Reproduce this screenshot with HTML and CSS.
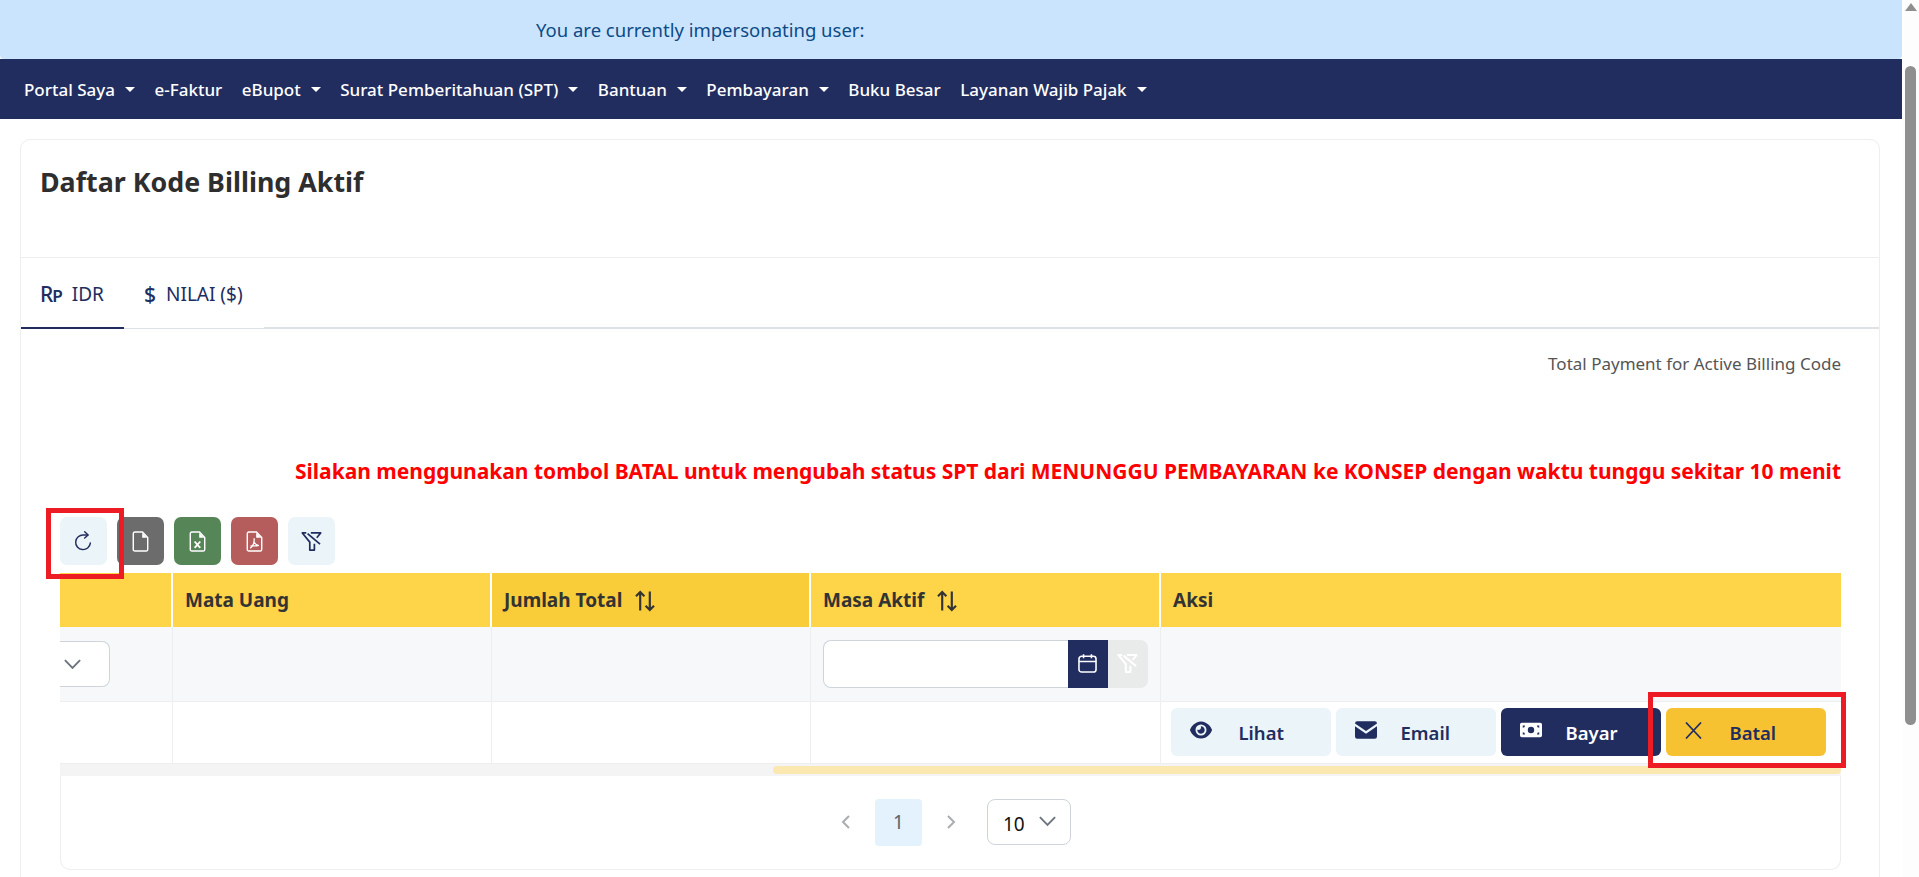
FILE: index.html
```html
<!DOCTYPE html>
<html lang="en">
<head>
    <meta charset="UTF-8">
    <meta name="viewport" content="width=device-width, initial-scale=1.0">
    <title>Daftar Kode Billing Aktif</title>
    <link rel="stylesheet" href="styles.css">
</head>
<body>
<div class="page">
    <div class="main">
        <div class="alert">You are currently impersonating user:</div>

        <nav class="navbar">
            <a class="nav-link caret">Portal Saya</a>
            <a class="nav-link">e-Faktur</a>
            <a class="nav-link caret">eBupot</a>
            <a class="nav-link caret">Surat Pemberitahuan (SPT)</a>
            <a class="nav-link caret">Bantuan</a>
            <a class="nav-link caret">Pembayaran</a>
            <a class="nav-link">Buku Besar</a>
            <a class="nav-link caret">Layanan Wajib Pajak</a>
        </nav>

        <div class="card">
            <div class="card-header">
                <h1>Daftar Kode Billing Aktif</h1>
            </div>

            <div class="tabs">
                <div class="tab active"><span class="tab-icon rp">Rp</span>IDR</div>
                <div class="tab"><span class="tab-icon dollar">$</span>NILAI ($)</div>
            </div>

            <div class="card-body">
                <p class="total">Total Payment for Active Billing Code</p>
                <p class="warning">Silakan menggunakan tombol BATAL untuk mengubah status SPT dari MENUNGGU PEMBAYARAN ke KONSEP dengan waktu tunggu sekitar 10 menit</p>

                <div class="toolbar">
                    <button class="tool light">
                        <svg viewBox="0 0 16 16" class="ico"><path d="M13.2 9.2A5.6 5.6 0 1 1 8 3h3.2" fill="none" stroke="currentColor" stroke-width="1.1" stroke-linecap="round"/><path d="M8.9 .6 11.5 3 8.9 5.4" fill="none" stroke="currentColor" stroke-width="1.1" stroke-linecap="round" stroke-linejoin="round"/></svg>
                    </button>
                    <button class="tool grey">
                        <svg viewBox="0 0 16 16" class="ico"><path d="M2.500 2c0-.7.5-1.200 1.200-1.200h5.800L13.500 5v9c0 .7-.5 1.200-1.200 1.200H3.700c-.7 0-1.200-.5-1.200-1.200z" fill="none" stroke="currentColor" stroke-width="1.100"/><path d="M9.300 1.400V5.200h3.800z" fill="currentColor"/></svg>
                    </button>
                    <button class="tool green">
                        <svg viewBox="0 0 16 16" class="ico"><path d="M2.500 2c0-.7.5-1.200 1.200-1.200h5.800L13.500 5v9c0 .7-.5 1.200-1.200 1.200H3.700c-.7 0-1.200-.5-1.200-1.200z" fill="none" stroke="currentColor" stroke-width="1.100"/><path d="M9.300 1.400V5.200h3.800z" fill="currentColor"/><path d="M5.800 8l4.300 4.800M10.100 8l-4.300 4.800" stroke="currentColor" stroke-width="1.400"/></svg>
                    </button>
                    <button class="tool red">
                        <svg viewBox="0 0 16 16" class="ico"><path d="M2.500 2c0-.7.5-1.200 1.200-1.200h5.800L13.500 5v9c0 .7-.5 1.200-1.200 1.200H3.700c-.7 0-1.200-.5-1.200-1.200z" fill="none" stroke="currentColor" stroke-width="1.100"/><path d="M9.300 1.400V5.200h3.800z" fill="currentColor"/><path d="M7.700 5.500c.4 3-1 6-3 7.700M7.700 8.600c.7 1.300 2 2.300 3.700 2.500M5 11.300h5.500" fill="none" stroke="currentColor" stroke-width="1"/></svg>
                    </button>
                    <button class="tool light">
                        <svg viewBox="0 0 16 16" class="ico"><path d="M4 1.500H1l5.700 7v6h3.500V9.800M7.500 1.500H15l-3 3.700" fill="none" stroke="currentColor" stroke-width="1.300" stroke-linejoin="round"/><path d="M5 2l9.500 8" stroke="currentColor" stroke-width="1.300"/></svg>
                    </button>
                </div>

                <div class="table-wrap">
                    <table class="table">
                        <colgroup>
                            <col class="col-a"><col class="col-b"><col class="col-c"><col class="col-d"><col class="col-e">
                        </colgroup>
                        <thead>
                            <tr>
                                <th></th>
                                <th>Mata Uang</th>
                                <th class="sorted">Jumlah Total <svg viewBox="0 0 20 20" class="sort"><path d="M6 18V2.500M2.500 6 6 2.500 9.500 6M14 2v15.500M10.500 14l3.500 3.500 3.500-3.500" fill="none" stroke="currentColor" stroke-width="1.800"/></svg></th>
                                <th>Masa Aktif <svg viewBox="0 0 20 20" class="sort"><path d="M6 18V2.500M2.500 6 6 2.500 9.500 6M14 2v15.500M10.500 14l3.500 3.500 3.500-3.500" fill="none" stroke="currentColor" stroke-width="1.800"/></svg></th>
                                <th>Aksi</th>
                            </tr>
                        </thead>
                        <tbody>
                            <tr class="filter-row">
                                <td>
                                    <div class="partial-select">
                                        <svg viewBox="0 0 20 12" class="chev"><path d="M2 2l8 8 8-8" fill="none" stroke="currentColor" stroke-width="2"/></svg>
                                    </div>
                                </td>
                                <td></td>
                                <td></td>
                                <td>
                                    <div class="date-filter">
                                        <div class="date-input"></div>
                                        <div class="date-btn">
                                            <svg viewBox="0 0 16 16" class="ico"><rect x="1.500" y="2.500" width="13" height="12" rx="2" fill="none" stroke="currentColor" stroke-width="1.200"/><path d="M1.500 6.500h13M5 1v3M11 1v3" stroke="currentColor" stroke-width="1.200"/></svg>
                                        </div>
                                        <div class="clear-btn">
                                            <svg viewBox="0 0 16 16" class="ico"><path d="M4 1.500H1l5.700 7v6h3.500V9.800M7.500 1.500H15l-3 3.700" fill="none" stroke="currentColor" stroke-width="1.500" stroke-linejoin="round"/><path d="M5 2l9.500 8" stroke="currentColor" stroke-width="1.500"/></svg>
                                        </div>
                                    </div>
                                </td>
                                <td></td>
                            </tr>
                            <tr class="data-row">
                                <td></td>
                                <td></td>
                                <td></td>
                                <td></td>
                                <td class="actions">
                                    <div class="action-list">
                                        <button class="action soft">
                                            <svg viewBox="0 0 576 512" class="act-ico eye"><path fill="currentColor" d="M288 32c-80.800 0-145.500 36.800-192.600 80.600C48.600 156 17.300 208 2.500 243.700c-3.300 7.900-3.300 16.700 0 24.600C17.300 304 48.600 356 95.400 399.400C142.500 443.200 207.200 480 288 480s145.500-36.800 192.600-80.600c46.800-43.500 78.100-95.400 93-131.100c3.300-7.900 3.300-16.700 0-24.600c-14.900-35.700-46.200-87.700-93-131.100C433.500 68.800 368.800 32 288 32zM144 256a144 144 0 1 1 288 0 144 144 0 1 1 -288 0zm144-64c0 35.300-28.700 64-64 64c-7.100 0-13.900-1.200-20.300-3.300c-5.500-1.800-11.900 1.600-11.700 7.400c.3 6.900 1.300 13.800 3.200 20.700c13.700 51.200 66.400 81.600 117.600 67.900s81.600-66.400 67.900-117.600c-11.100-41.500-47.800-69.400-88.600-71.100c-5.800-.2-9.200 6.100-7.400 11.700c2.100 6.400 3.300 13.200 3.300 20.300z"/></svg>
                                            Lihat
                                        </button>
                                        <button class="action soft">
                                            <svg viewBox="0 0 20 16" class="act-ico"><path fill="currentColor" d="M2 0h16a2 2 0 0 1 2 2L10 9 0 2a2 2 0 0 1 2-2zM0 4.500 10 11.500 20 4.500V14a2 2 0 0 1-2 2H2a2 2 0 0 1-2-2z"/></svg>
                                            Email
                                        </button>
                                        <button class="action navy">
                                            <svg viewBox="0 0 24 16" class="act-ico"><path fill="currentColor" fill-rule="evenodd" d="M2 0h20a2 2 0 0 1 2 2v12a2 2 0 0 1-2 2H2a2 2 0 0 1-2-2V2a2 2 0 0 1 2-2zM12 4.500a3.500 3.500 0 1 0 0 7 3.500 3.500 0 0 0 0-7zM3 3v2.500A2.500 2.500 0 0 0 5.500 3zM21 13v-2.500A2.500 2.500 0 0 0 18.500 13zM3 13h2.500A2.500 2.500 0 0 0 3 10.500zM21 3h-2.500A2.500 2.500 0 0 0 21 5.500z"/></svg>
                                            Bayar
                                        </button>
                                        <button class="action amber">
                                            <svg viewBox="0 0 17 17" class="act-ico cross"><path d="M1 .5l15 16M16 .5l-15 16" fill="none" stroke="currentColor" stroke-width="1.700"/></svg>
                                            Batal
                                        </button>
                                    </div>
                                </td>
                            </tr>
                        </tbody>
                    </table>
                    <div class="h-scroll"><div class="h-thumb"></div></div>
                </div>

                <div class="pager">
                    <svg viewBox="0 0 10 16" class="pg-arrow"><path d="M8 2 2 8l6 6" fill="none" stroke="currentColor" stroke-width="2"/></svg>
                    <div class="pg-num">1</div>
                    <svg viewBox="0 0 10 16" class="pg-arrow"><path d="M2 2l6 6-6 6" fill="none" stroke="currentColor" stroke-width="2"/></svg>
                    <div class="pg-size"><span class="pg-value">10</span> <svg viewBox="0 0 20 12" class="chev"><path d="M2 2l8 8 8-8" fill="none" stroke="currentColor" stroke-width="2"/></svg></div>
                </div>
            </div>
        </div>
    </div>

    <div class="scrollbar">
        <div class="scroll-up"></div>
        <div class="scroll-thumb"></div>
    </div>

    <div class="mark mark-refresh"></div>
    <div class="mark mark-batal"></div>
</div>
</body>
</html>
```

FILE: styles.css
```css
* {
    box-sizing: border-box;
}

html, body {
    margin: 0;
    height: 100%;
    overflow: hidden;
}

body {
    font-family: "Noto Sans", "Open Sans", Arial, sans-serif;
    background-color: #fff;
    color: #333;
}

.page {
    display: flex;
    height: 877px;
    position: relative;
    overflow: hidden;
}

.main {
    flex: 1;
    min-width: 0;
}

/* top banner */
.alert {
    height: 59px;
    background-color: #cbe4fe;
    color: #0d4a86;
    font-size: 18.500px;
    line-height: 60px;
    padding-left: 536px;
    border-radius: 0 0 4px 4px;
}

.navbar {
    height: 60px;
    background-color: #212d5f;
    display: flex;
    align-items: center;
    padding-left: 24px;
    gap: 19.500px;
}

.nav-link {
    color: #fff;
    font-size: 17px;
    font-weight: 500;
    display: flex;
    align-items: center;
    white-space: nowrap;
}

.caret::after {
    content: "";
    margin-left: 10px;
    border-top: 5px solid #fff;
    border-left: 5px solid transparent;
    border-right: 5px solid transparent;
}

.card {
    margin: 20px 22px 0 20px;
    border: 1px solid #eceef0;
    border-radius: 10px;
    height: 800px;
}

.card-header {
    height: 118px;
    padding: 20px 19px 0;
    border-bottom: 1px solid #eceef0;
}

h1 {
    margin: 0;
    font-size: 26.800px;
    line-height: 43px;
    font-weight: 700;
    color: #2e2e2e;
}

.tabs {
    display: flex;
    height: 71px;
    border-bottom: 2px solid #dee2e6;
}

.tab {
    display: flex;
    align-items: center;
    height: 71px;
    padding: 2px 19px 0;
    font-size: 19px;
    color: #212d5f;
    background-color: #fff;
    border-bottom: 1px solid #dee2e6;
}

.tab.active {
    width: 103px;
    border-bottom: 2px solid #212d5f;
}

.tab:not(.active) {
    width: 140px;
    padding-left: 20px;
}

.tab-icon {
    font-weight: 700;
    margin-right: 10px;
}

.rp {
    font-size: 21px;
    font-weight: 500;
    font-variant: small-caps;
    letter-spacing: -1px;
}

.dollar {
    font-size: 21px;
    font-weight: 500;
}

.card-body {
    padding: 23px 38px 0 39px;
}

.total {
    margin: 0;
    text-align: right;
    font-size: 17px;
    line-height: 24px;
    color: #555;
}

.warning {
    margin: 81px 0 0;
    text-align: right;
    font-size: 21px;
    letter-spacing: -0.015px;
    line-height: 28px;
    font-weight: 700;
    color: #f00;
    white-space: nowrap;
}

.toolbar {
    display: flex;
    gap: 10px;
    margin-top: 32px;
}

.tool {
    width: 47px;
    height: 48px;
    border: none;
    border-radius: 7px;
    padding: 0;
    display: flex;
    align-items: center;
    justify-content: center;
}

.tool.light { background-color: #ebf4f8; color: #212d5f; }
.tool.grey { background-color: #6c6c6c; color: #fff; }
.tool.green { background-color: #568558; color: #fff; }
.tool.red { background-color: #b55c5c; color: #fff; }

.ico {
    width: 21px;
    height: 21px;
}

.table-wrap {
    margin-top: 8px;
}

.table {
    width: 100%;
    table-layout: fixed;
    border-collapse: collapse;
}

.col-a { width: 112px; }
.col-b { width: 319px; }
.col-c { width: 319px; }
.col-d { width: 350px; }

th {
    height: 54px;
    background-color: #fed449;
    border-right: 2px solid #fff;
    text-align: left;
    padding: 0 12px;
    font-size: 19px;
    font-weight: 700;
    color: #333;
    white-space: nowrap;
}

th:last-child,
td:last-child {
    border-right: none;
}

th.sorted {
    background-color: #f9cc3a;
}

.sort {
    width: 24px;
    height: 24px;
    vertical-align: -6px;
    margin-left: 6px;
}

td {
    border-right: 1px solid #eceef0;
    border-bottom: 1px solid #eceef0;
    padding: 0 12px;
}

.filter-row td {
    height: 74px;
    background-color: #f6f8fa;
}

.data-row td {
    height: 62px;
}

.partial-select {
    width: 50px;
    height: 46px;
    margin-left: -12px;
    background-color: #fff;
    border: 1px solid #ced4da;
    border-left: none;
    border-radius: 0 8px 8px 0;
    display: flex;
    align-items: center;
    padding-left: 3px;
    color: #6c757d;
}

.chev {
    width: 19px;
    height: 12px;
}

.date-filter {
    display: flex;
    height: 48px;
}

.date-input {
    width: 245px;
    background-color: #fff;
    border: 1px solid #ced4da;
    border-right: none;
    border-radius: 8px 0 0 8px;
}

.date-btn,
.clear-btn {
    width: 40px;
    display: flex;
    align-items: center;
    justify-content: center;
    color: #fff;
}

.date-btn {
    background-color: #212d5f;
}

.clear-btn {
    background-color: #e9eaea;
    border-radius: 0 8px 8px 0;
}

.actions {
    padding: 0 10px;
}

.action-list {
    display: flex;
    gap: 5px;
}

.action {
    width: 160px;
    height: 48px;
    border: none;
    border-radius: 6px;
    display: flex;
    align-items: center;
    padding: 0 0 0 19px;
    font-family: inherit;
    font-size: 18.500px;
    font-weight: 600;
}

.act-ico {
    width: 22px;
    height: 18px;
    margin-right: 24px;
    margin-top: -4px;
}

.act-ico.eye {
    height: 20px;
    margin-right: 27px;
}

.act-ico.cross {
    width: 17px;
    height: 17px;
    margin-right: 28px;
}

.action.soft { background-color: #ebf4f8; color: #212d5f; }
.action.navy { background-color: #212d5f; color: #fff; }
.action.amber { background-color: #f7c231; color: #212d5f; }

.h-scroll {
    height: 12px;
    background-color: #f4f4f4;
    padding-top: 2px;
}

.h-thumb {
    height: 8px;
    margin-left: 713px;
    background-color: #fbe7b0;
    border-radius: 5px;
}

.pager {
    height: 94px;
    border: 1px solid #eceef0;
    border-top: none;
    border-radius: 0 0 10px 10px;
    display: flex;
    align-items: center;
    justify-content: center;
    padding-left: 11px;
    color: #a9adb1;
}

.pg-arrow {
    width: 10px;
    height: 16px;
}

.pg-num {
    width: 47px;
    height: 47px;
    margin: 0 24px;
    background-color: #e3f2fd;
    border-radius: 4px;
    color: #5a6268;
    font-size: 19px;
    display: flex;
    align-items: center;
    justify-content: center;
}

.pg-size {
    width: 84px;
    height: 46px;
    margin-left: 31px;
    border: 1px solid #ced4da;
    border-radius: 8px;
    color: #111;
    font-size: 19px;
    display: flex;
    align-items: center;
    gap: 13px;
    padding-left: 15px;
}

.pg-value {
    margin-top: 4px;
}

.pg-size .chev {
    color: #6c757d;
    margin-top: -2px;
}

/* page scrollbar drawn by hand */
.scrollbar {
    width: 17px;
    background-color: #fdfdfd;
    padding: 3px 3px 0;
}

.scroll-up {
    width: 0;
    height: 0;
    margin: 0 auto;
    border-left: 6px solid transparent;
    border-right: 6px solid transparent;
    border-bottom: 8px solid #8f8f8f;
}

.scroll-thumb {
    width: 11px;
    height: 659px;
    margin-top: 55px;
    background-color: #8f8f8f;
    border-radius: 6px;
}

/* red annotation boxes */
.mark {
    position: absolute;
    border: 5px solid #ed1c24;
}

.mark-refresh {
    left: 46px;
    top: 508px;
    width: 78px;
    height: 71px;
}

.mark-batal {
    left: 1648px;
    top: 692px;
    width: 198px;
    height: 76px;
}
```
